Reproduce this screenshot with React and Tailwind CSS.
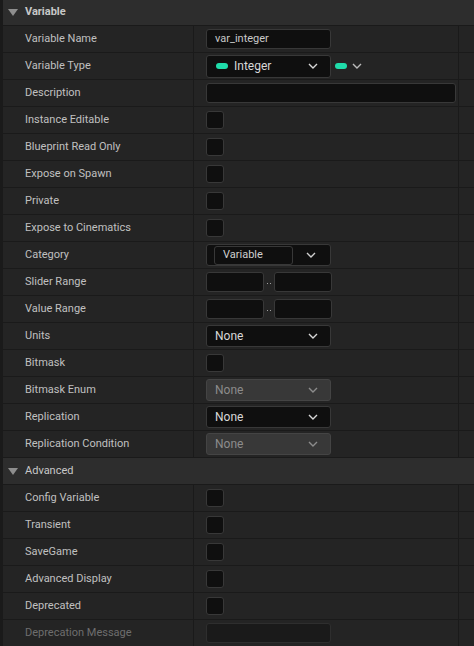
const font = { fontFamily: 'Roboto, "Noto Sans", sans-serif' };

const Chevron = ({ className = '' }) => (
  <svg viewBox="0 0 10 6" className={`h-[6px] w-[10px] ${className}`} aria-hidden="true">
    <path d="M1 1l4 4 4-4" fill="none" stroke="currentColor" strokeWidth="1.4" />
  </svg>
);

const Pill = () => <span className="inline-block h-[6px] w-[12px] rounded-full bg-[#1fdcaa]" />;

const Check = () => (
  <div className="h-[18px] w-[18px] rounded-[3px] border border-[#383838] bg-[#0f0f0f]" />
);

const TextBox = ({ value = '', wide }) => (
  <div
    className={`flex h-[20px] items-center rounded-[3px] border border-[#383838] bg-[#0f0f0f] px-2 text-[11px] text-[#c8c8c8] ${
      wide ? 'w-[250px]' : 'w-[125px]'
    }`}
  >
    {value}
  </div>
);

const Combo = ({ value, disabled }) => (
  <div
    className={`flex h-[22px] w-[125px] items-center justify-between rounded-[3px] border pl-2 pr-3 text-[12px] ${
      disabled
        ? 'border-[#444] bg-[#383838] text-[#8c8c8c]'
        : 'border-[#383838] bg-[#0f0f0f] text-[#d8d8d8]'
    }`}
  >
    <span>{value}</span>
    <Chevron />
  </div>
);

// two tiny dots between the min / max boxes
const Range = () => (
  <div className="flex items-center">
    <div className="h-[20px] w-[58px] rounded-[3px] border border-[#383838] bg-[#0f0f0f]" />
    <div className="flex w-[10px] items-center justify-center gap-[2px] pt-[2px]">
      <span className="h-px w-px bg-[#a0a0a0]" />
      <span className="h-px w-px bg-[#a0a0a0]" />
    </div>
    <div className="h-[20px] w-[58px] rounded-[3px] border border-[#383838] bg-[#0f0f0f]" />
  </div>
);

const Header = ({ title, first }) => (
  <div
    className={`flex items-center border-b border-[#1a1a1a] bg-[#2d2d2d] ${first ? 'h-[26px]' : 'h-[27px]'}`}
  >
    <svg viewBox="0 0 10 7" className="ml-[5px] h-[7px] w-[10px] text-[#8e8e8e]" aria-hidden="true">
      <path d="M0 0h10L5 7z" fill="currentColor" />
    </svg>
    <span className={`ml-[7px] text-[11px] text-[#c8c8c8] ${first ? 'font-bold' : ''}`}>{title}</span>
  </div>
);

const Row = ({ label, dim, children }) => (
  <div className="flex h-[27px] border-b border-[#1a1a1a]">
    <div className={`flex w-[190px] items-center pl-[22px] text-[11px] ${dim ? 'text-[#6e6e6e]' : 'text-[#c0c0c0]'}`}>
      {label}
    </div>
    <div className="flex w-[265px] items-center border-l border-[#1a1a1a] pl-[12px]">{children}</div>
    <div className="flex-1 border-l border-[#1a1a1a]" />
  </div>
);

export default function App() {
  return (
    <div className="h-[646px] w-[474px] overflow-hidden border-l-[3px] border-[#1a1a1a] bg-[#242424]" style={font}>
      <Header title="Variable" first />
      <Row label="Variable Name">
        <TextBox value="var_integer" />
      </Row>
      <Row label="Variable Type">
        <div className="flex h-[23px] w-[125px] items-center rounded-[3px] border border-[#383838] bg-[#0f0f0f] pl-[9px] pr-3 text-[12px] text-[#d8d8d8]">
          <Pill />
          <span className="ml-[6px] flex-1">Integer</span>
          <Chevron />
        </div>
        <div className="ml-[4px] flex items-center gap-[5px] text-[#bbb]">
          <Pill />
          <Chevron />
        </div>
      </Row>
      <Row label="Description">
        <TextBox wide />
      </Row>
      <Row label="Instance Editable"><Check /></Row>
      <Row label="Blueprint Read Only"><Check /></Row>
      <Row label="Expose on Spawn"><Check /></Row>
      <Row label="Private"><Check /></Row>
      <Row label="Expose to Cinematics"><Check /></Row>
      <Row label="Category">
        <div className="flex h-[22px] w-[125px] items-center rounded-[3px] border border-[#383838] bg-[#0f0f0f] pl-[7px] pr-[14px] text-[11px] text-[#d0d0d0]">
          <div className="flex h-[19px] w-[79px] items-center rounded-[3px] border border-[#383838] bg-[#0f0f0f] pl-[8px]">
            Variable
          </div>
          <span className="flex-1" />
          <Chevron />
        </div>
      </Row>
      <Row label="Slider Range"><Range /></Row>
      <Row label="Value Range"><Range /></Row>
      <Row label="Units"><Combo value="None" /></Row>
      <Row label="Bitmask"><Check /></Row>
      <Row label="Bitmask Enum"><Combo value="None" disabled /></Row>
      <Row label="Replication"><Combo value="None" /></Row>
      <Row label="Replication Condition"><Combo value="None" disabled /></Row>
      <Header title="Advanced" />
      <Row label="Config Variable"><Check /></Row>
      <Row label="Transient"><Check /></Row>
      <Row label="SaveGame"><Check /></Row>
      <Row label="Advanced Display"><Check /></Row>
      <Row label="Deprecated"><Check /></Row>
      <Row label="Deprecation Message" dim>
        <div className="h-[20px] w-[125px] rounded-[3px] border border-[#2e2e2e] bg-[#1a1a1a]" />
      </Row>
    </div>
  );
}
